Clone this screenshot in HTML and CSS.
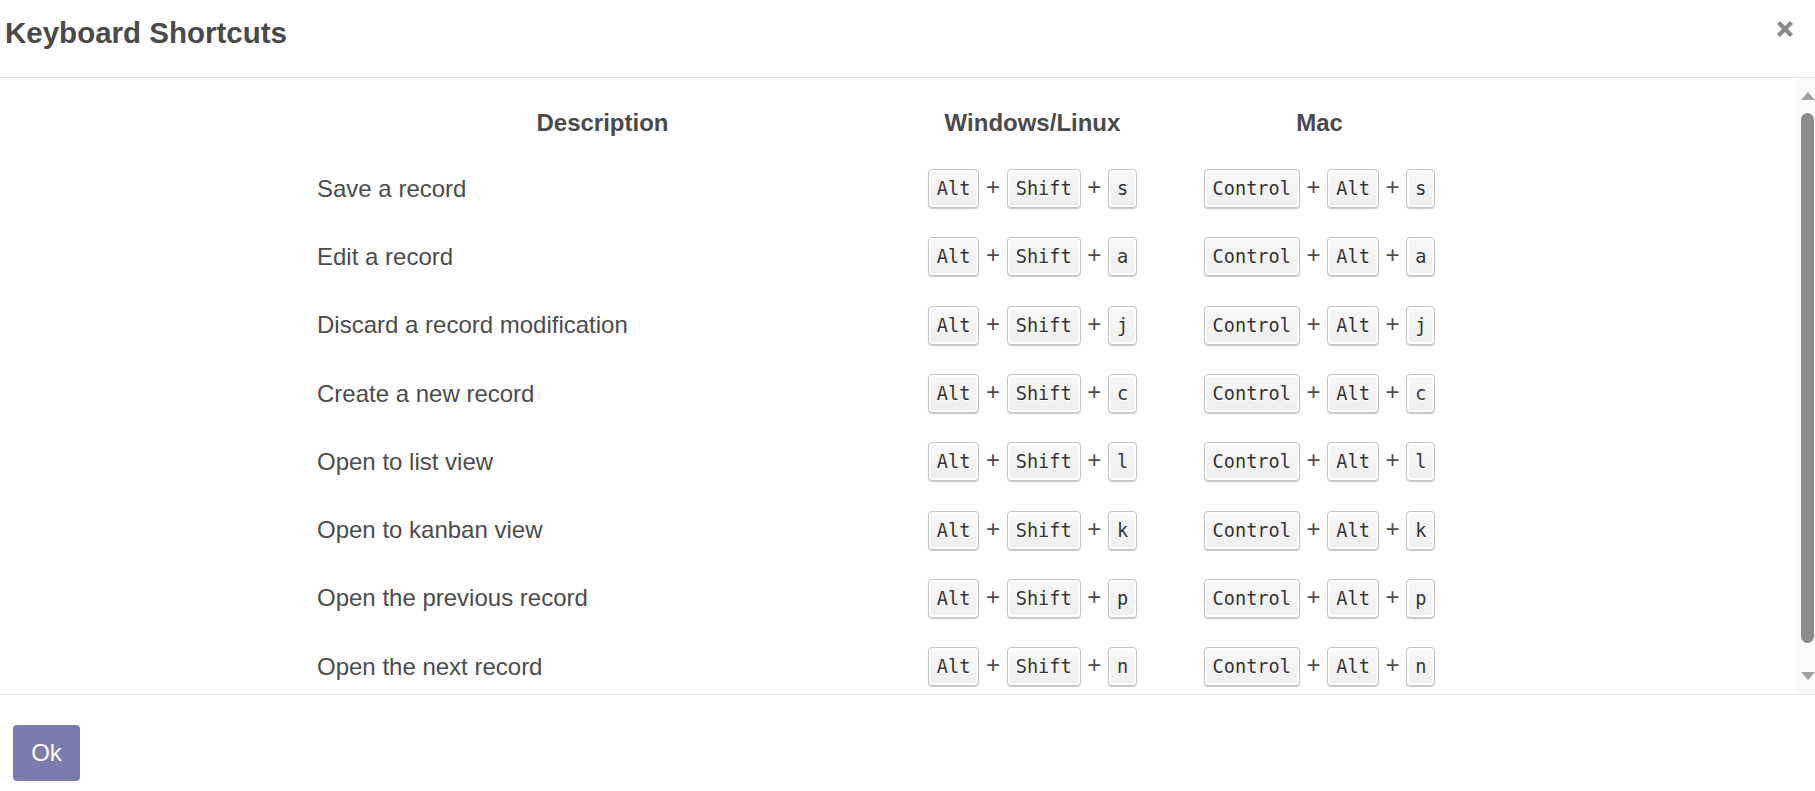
FILE: index.html
```html
<!DOCTYPE html>
<html lang="en">
<head>
<meta charset="utf-8">
<title>Keyboard Shortcuts</title>
<link rel="stylesheet" href="styles.css">
</head>
<body>
<div class="modal">
  <header class="modal-header">
    <h4 class="modal-title">Keyboard Shortcuts</h4>
    <button class="close" aria-label="Close">
      <svg width="18" height="18" viewBox="0 0 18 18"><path d="M2.5 2.5 L15.5 15.5 M15.5 2.5 L2.5 15.5" stroke="#888" stroke-width="4.2" stroke-linecap="butt"/></svg>
    </button>
  </header>
  <div class="modal-body">
    <div class="body-content">
      <table class="shortcut-table">
        <colgroup>
          <col class="col-desc"><col class="col-win"><col class="col-mac">
        </colgroup>
        <thead>
          <tr><th>Description</th><th>Windows/Linux</th><th>Mac</th></tr>
        </thead>
        <tbody>
          <tr><td class="desc">Save a record</td><td><kbd>Alt</kbd> + <kbd>Shift</kbd> + <kbd>s</kbd></td><td><kbd>Control</kbd> + <kbd>Alt</kbd> + <kbd>s</kbd></td></tr>
          <tr><td class="desc">Edit a record</td><td><kbd>Alt</kbd> + <kbd>Shift</kbd> + <kbd>a</kbd></td><td><kbd>Control</kbd> + <kbd>Alt</kbd> + <kbd>a</kbd></td></tr>
          <tr><td class="desc">Discard a record modification</td><td><kbd>Alt</kbd> + <kbd>Shift</kbd> + <kbd>j</kbd></td><td><kbd>Control</kbd> + <kbd>Alt</kbd> + <kbd>j</kbd></td></tr>
          <tr><td class="desc">Create a new record</td><td><kbd>Alt</kbd> + <kbd>Shift</kbd> + <kbd>c</kbd></td><td><kbd>Control</kbd> + <kbd>Alt</kbd> + <kbd>c</kbd></td></tr>
          <tr><td class="desc">Open to list view</td><td><kbd>Alt</kbd> + <kbd>Shift</kbd> + <kbd>l</kbd></td><td><kbd>Control</kbd> + <kbd>Alt</kbd> + <kbd>l</kbd></td></tr>
          <tr><td class="desc">Open to kanban view</td><td><kbd>Alt</kbd> + <kbd>Shift</kbd> + <kbd>k</kbd></td><td><kbd>Control</kbd> + <kbd>Alt</kbd> + <kbd>k</kbd></td></tr>
          <tr><td class="desc">Open the previous record</td><td><kbd>Alt</kbd> + <kbd>Shift</kbd> + <kbd>p</kbd></td><td><kbd>Control</kbd> + <kbd>Alt</kbd> + <kbd>p</kbd></td></tr>
          <tr><td class="desc">Open the next record</td><td><kbd>Alt</kbd> + <kbd>Shift</kbd> + <kbd>n</kbd></td><td><kbd>Control</kbd> + <kbd>Alt</kbd> + <kbd>n</kbd></td></tr>
        </tbody>
      </table>
    </div>
    <div class="scrollbar">
      <svg class="arrow" width="14" height="8" viewBox="0 0 14 8"><path d="M0 8 L7 0 L14 8 Z" fill="#a0a0a0"/></svg>
      <div class="thumb"></div>
      <svg class="arrow arrow-down" width="14" height="8" viewBox="0 0 14 8"><path d="M0 0 L14 0 L7 8 Z" fill="#a0a0a0"/></svg>
    </div>
  </div>
  <footer class="modal-footer">
    <button class="btn-primary">Ok</button>
  </footer>
</div>
</body>
</html>
```

FILE: styles.css
```css
html, body {
  margin: 0;
  padding: 0;
  background: #fff;
}

body {
  font-family: "Liberation Sans", Arial, sans-serif;
  color: #4c4c4c;
  width: 1815px;
  height: 791px;
  overflow: hidden;
}

.modal {
  display: flex;
  flex-direction: column;
  height: 791px;
}

.modal-header {
  box-sizing: border-box;
  height: 78px;
  display: flex;
  justify-content: space-between;
  align-items: flex-start;
  padding: 15px 21px 0 5px;
  border-bottom: 1px solid #e2e2e2;
  flex: none;
}

.modal-title {
  margin: 0;
  font-size: 29.5px;
  line-height: 35px;
  font-weight: bold;
  color: #4a4a4a;
}

.close {
  border: 0;
  background: none;
  padding: 0;
  margin-top: 5px;
  width: 18px;
  height: 18px;
  display: block;
}

.close svg {
  display: block;
}

.modal-body {
  display: flex;
  height: 616px;
  flex: none;
}

.body-content {
  flex: 1;
  overflow: hidden;
  padding: 12.8px 17px 0 0;
}

.shortcut-table {
  table-layout: fixed;
  border-collapse: collapse;
  width: 1161px;
  margin: 0 auto;
}

.col-desc { width: 587px; }
.col-win { width: 273px; }
.col-mac { width: 301px; }

.shortcut-table th {
  height: 63.7px;
  padding: 0 8px;
  font-size: 24px;
  font-weight: bold;
  text-align: center;
  vertical-align: middle;
  color: #4a4a4a;
}

.shortcut-table td {
  height: 68.3px;
  padding: 0 8px;
  font-size: 24px;
  text-align: center;
  vertical-align: middle;
  white-space: nowrap;
}

.shortcut-table td.desc {
  text-align: left;
}

kbd {
  display: inline-block;
  vertical-align: middle;
  font-family: "DejaVu Sans Mono", "Liberation Mono", monospace;
  font-size: 18.6px;
  line-height: 36px;
  padding: 1px 8px 0;
  color: #333;
  background: linear-gradient(#f8f8f8, #eeeeee);
  border: 1px solid #c4c4c4;
  border-radius: 4px;
  box-shadow: 0 1px 1px rgba(0, 0, 0, 0.22), inset 0 0 0 2px #fff;
  text-shadow: 0 1px 0 #fff;
}

.scrollbar {
  width: 19px;
  flex: none;
  background: #f9f9f9;
  display: flex;
  flex-direction: column;
  align-items: center;
  padding-top: 14px;
  box-sizing: border-box;
}

.arrow {
  display: block;
  margin-left: 4px;
}

.thumb {
  width: 13px;
  height: 530px;
  margin-top: 12.7px;
  margin-left: 4px;
  background: #8b8b8b;
  border-radius: 7px;
}

.arrow-down {
  margin-top: 29px;
}

.modal-footer {
  border-top: 1px solid #e2e2e2;
  padding: 30px 0 0 13px;
  flex: 1;
}

.btn-primary {
  width: 67px;
  height: 56px;
  border: 0;
  border-radius: 4px;
  background: #7c7bad;
  color: #fff;
  font-family: "Liberation Sans", Arial, sans-serif;
  font-size: 24px;
  padding: 0;
  display: block;
}
```
